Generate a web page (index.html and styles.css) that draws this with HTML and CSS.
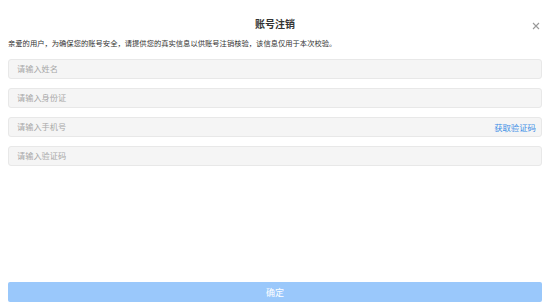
FILE: index.html
```html
<!DOCTYPE html>
<html>
<head>
<meta charset="utf-8">
<link rel="stylesheet" href="styles.css">
</head>
<body>
<div class="m-dialog">
    <div class="m-dialog-hd">
        <h2 class="title">账号注销</h2>
        <span class="close">
            <svg width="8" height="8" viewBox="0 0 8 8"><path d="M1 1L7 7M7 1L1 7" stroke="#999" stroke-width="1.1" fill="none"/></svg>
        </span>
    </div>
    <p class="tip">亲爱的用户，为确保您的账号安全，请提供您的真实信息以供账号注销核验，该信息仅用于本次校验。</p>
    <ul class="m-form">
        <li><input type="text" placeholder="请输入姓名"></li>
        <li><input type="text" placeholder="请输入身份证"></li>
        <li><input type="text" placeholder="请输入手机号"><a class="code">获取验证码</a></li>
        <li><input type="text" placeholder="请输入验证码"></li>
    </ul>
    <button class="u-btn" disabled>确定</button>
</div>
</body>
</html>
```

FILE: styles.css
```css
html, body {margin: 0; padding: 0; background: #fff;}
body {font-family: "Liberation Sans", "Noto Sans CJK SC", sans-serif; color: #333;}
.m-dialog {display: flex; flex-direction: column; box-sizing: border-box; height: 308px; padding: 0 8px 6px;}
.m-dialog-hd {position: relative; margin-top: 17px;}
.m-dialog-hd .title {margin: 0; font-size: 10px; line-height: 15px; font-weight: bold; text-align: center; color: #333;}
.m-dialog-hd .close {position: absolute; right: 2px; top: 5px; width: 8px; height: 8px; display: block;}
.m-dialog-hd .close svg {display: block;}
.tip {margin: 6px 0 9px; font-size: 7.3px; line-height: 12px; color: #333; white-space: nowrap;}
.m-form {list-style: none; margin: 0; padding: 0; display: flex; flex-direction: column; gap: 9px;}
.m-form li {display: flex; align-items: center; box-sizing: border-box; height: 20px; background: #f5f5f5; border: 1px solid #e8e8e8; border-radius: 3px; padding: 0 5px 0 8px;}
.m-form input {flex: 1; min-width: 0; border: 0; outline: 0; background: transparent; padding: 0; font-family: inherit; font-size: 8.2px; color: #333;}
.m-form input::placeholder {color: #a8a8a8;}
.m-form .code {font-size: 8.4px; color: #3d8fe6; white-space: nowrap;}
.u-btn {margin-top: auto; height: 20px; border: 0; border-radius: 2px; background: #9ac8fb; color: #fff; font-family: inherit; font-size: 9px; padding: 0;}
```
